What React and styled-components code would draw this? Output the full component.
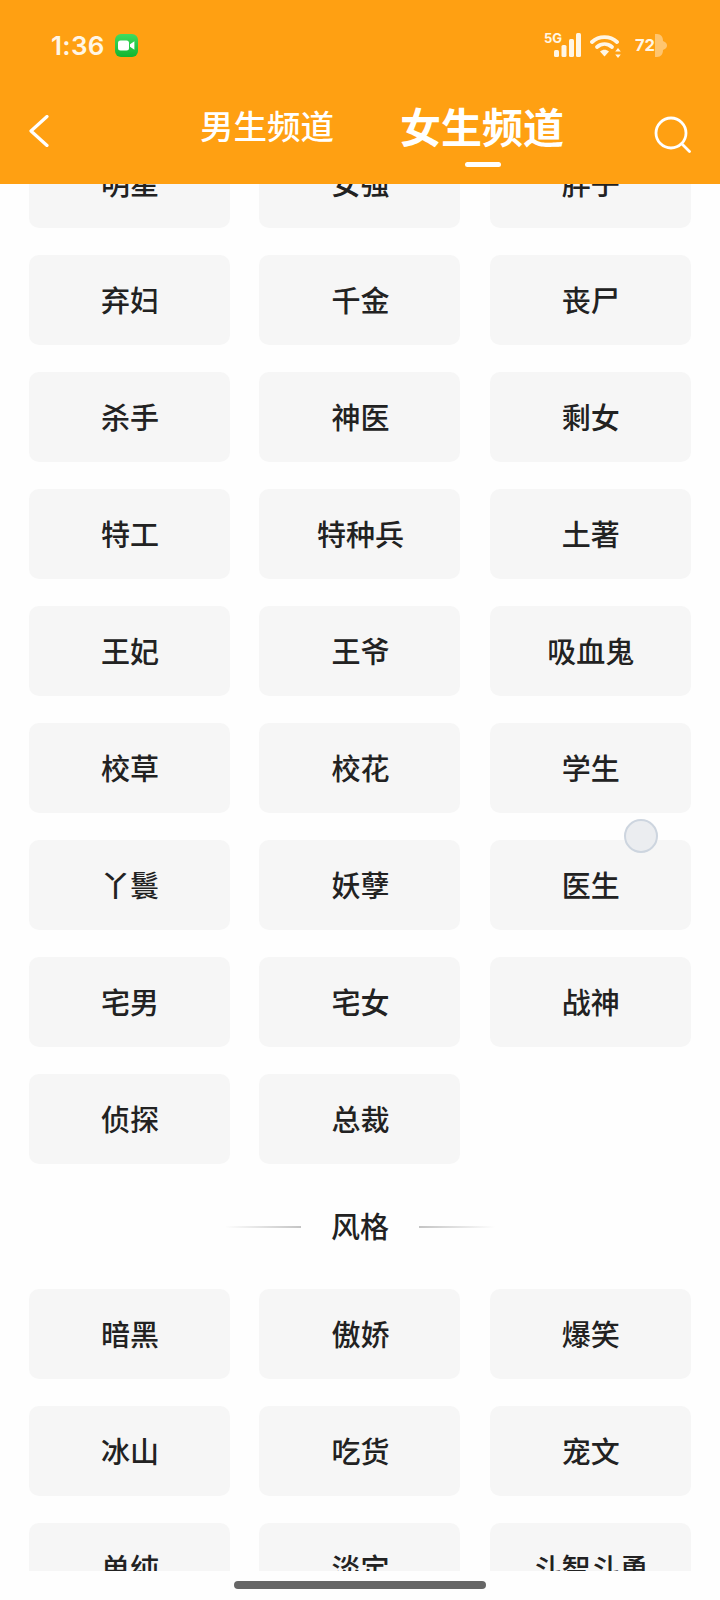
import React from 'react';
import styled, { createGlobalStyle } from 'styled-components';

const Global = createGlobalStyle`
  html, body { margin: 0; padding: 0; background: #fff; }
  * { box-sizing: border-box; }
`;
const CJK = `"Noto Sans CJK SC", "Noto Sans", sans-serif`;

const Page = styled.div`
  position: relative;
  width: 720px;
  height: 1600px;
  overflow: hidden;
  display: flex;
  flex-direction: column;
  background: #fefefe;
  font-family: ${CJK};
`;
const Header = styled.header`
  flex: none;
  height: 183.5px;
  background: #ffa012;
  color: #fff;
  position: relative;
  z-index: 1;
`;
const StatusBar = styled.div`
  height: 94px;
  padding: 34px 53px 0 51px;
  display: flex;
  align-items: flex-start;
`;
const Time = styled.span`
  font-family: Inter, sans-serif;
  font-weight: 600;
  font-size: 26px;
  line-height: 24px;
  letter-spacing: 0.3px;
  color: #fff6e6;
`;
const CallBadge = styled.span`
  width: 23px;
  height: 23px;
  margin-left: 10px;
  border-radius: 6px;
  background: linear-gradient(#3fdc5f, #12b52f);
  display: flex;
  align-items: center;
  justify-content: center;
`;
const StatusRight = styled.div`
  margin-left: auto;
  display: flex;
  align-items: flex-start;
`;
const BatteryText = styled.span`
  font-family: Inter, sans-serif;
  font-weight: 700;
  font-size: 16.5px;
  line-height: 23px;
  color: #fff6e6;
  margin-left: 14px;
`;
const Nav = styled.nav`
  height: 89.5px;
  padding: 0 29px;
  display: flex;
  align-items: flex-start;
`;
const BackButton = styled.span`
  display: block;
  margin-top: 21px;
  height: 32px;
  line-height: 0;
`;
const Tabs = styled.div`
  margin-left: 151px;
  display: flex;
  align-items: center;
  gap: 66px;
  height: 62px;
`;
const Tab = styled.span`
  position: relative;
  font-size: ${p => (p.$active ? '41px' : '33.5px')};
  font-weight: ${p => (p.$active ? 700 : 500)};
  line-height: 62px;
  white-space: nowrap;
  color: #fff;
  &::after {
    content: '';
    display: ${p => (p.$active ? 'block' : 'none')};
    position: absolute;
    left: 64.5px;
    bottom: -11px;
    width: 36px;
    height: 5px;
    border-radius: 3px;
    background: #fff;
  }
`;
const SearchButton = styled.span`
  display: block;
  margin-left: auto;
  margin-top: 22px;
  line-height: 0;
`;
const Clip = styled.main`
  flex: 1;
  min-height: 0;
  overflow: hidden;
`;
const Content = styled.div`
  margin-top: -45.5px;
  padding: 0 29px;
`;
const Grid = styled.div`
  display: grid;
  grid-template-columns: repeat(3, 201px);
  column-gap: 29.4px;
  row-gap: 27px;
`;
const Tile = styled.div`
  height: 90px;
  padding: 0 0 2px 1px;
  border-radius: 10px;
  background: #f6f6f6;
  color: #222;
  font-size: 29px;
  font-weight: 500;
  display: flex;
  align-items: center;
  justify-content: center;
`;
const SectionTitle = styled.div`
  height: 125px;
  display: flex;
  align-items: center;
  justify-content: center;
  gap: 30px;
  color: #222;
  font-size: 29px;
  font-weight: 500;
`;
const SectionLabel = styled.span`
  margin-bottom: 3px;
`;
const Rule = styled.span`
  width: 76px;
  height: 2px;
  background: linear-gradient(${p => (p.$flip ? 'to right' : 'to left')}, #c4c4c4, rgba(196,196,196,0));
`;
const Footer = styled.footer`
  flex: none;
  height: 29px;
  background: #fefefe;
  display: flex;
  justify-content: center;
  padding-top: 10px;
`;
const HomeBar = styled.span`
  width: 252px;
  height: 8px;
  border-radius: 4px;
  background: #666;
`;
const TouchDot = styled.span`
  position: absolute;
  left: 624px;
  top: 819px;
  width: 34px;
  height: 34px;
  border-radius: 50%;
  background: #ebedf0;
  border: 2px solid #cdd5df;
  z-index: 2;
`;

const first = ['明星','女强','胖子','弃妇','千金','丧尸','杀手','神医','剩女','特工','特种兵','土著','王妃','王爷','吸血鬼','校草','校花','学生','丫鬟','妖孽','医生','宅男','宅女','战神','侦探','总裁'];
const second = ['暗黑','傲娇','爆笑','冰山','吃货','宠文','单纯','淡定','斗智斗勇'];

export default function App() {
  return (
    <Page>
      <Global />
      <Header>
        <StatusBar>
          <Time>1:36</Time>
          <CallBadge>
            <svg width="17" height="11" viewBox="0 0 17 11">
              <rect x="0" y="0.5" width="11" height="10" rx="2.5" fill="#fff" />
              <path d="M12 4.2 16.4 1.2V9.8L12 6.8Z" fill="#fff" />
            </svg>
          </CallBadge>
          <StatusRight>
            <svg width="38" height="25" viewBox="0 0 38 25" style={{ marginTop: -2, overflow: 'visible' }}>
              <text x="0" y="11" fontFamily="Inter, sans-serif" fontWeight="700" fontSize="13" fill="#fff6e6">5G</text>
              <rect x="10" y="18" width="5" height="7" rx="1.5" fill="#fff6e6" />
              <rect x="17.500" y="13" width="5" height="12" rx="1.5" fill="#fff6e6" />
              <rect x="25" y="7" width="5" height="18" rx="1.5" fill="#fff6e6" />
              <rect x="32" y="1" width="5" height="24" rx="1.5" fill="#fff6e6" />
            </svg>
            <svg width="31" height="24" viewBox="0 0 31 24" style={{ marginLeft: 8, marginTop: 0 }}>
              <g fill="none" stroke="#fff6e6" strokeWidth="3.8" strokeLinecap="round">
                <path d="M2 8C9 1.500 20 1.500 27 8" />
                <path d="M7 13C11.500 9.200 17.500 9.200 22 13" />
              </g>
              <path d="M10 17.500C13 15 16 15 19 17.500L14.500 22.500Z" fill="#fff6e6" />
              <path d="M28 14 30.800 17.500H25.200ZM28 24 25.200 20.500H30.800Z" fill="#fff6e6" />
            </svg>
            <BatteryText>72</BatteryText>
            <svg width="12" height="23" viewBox="0 0 12 23">
              <path d="M0 0H2C6 0 8 3 8 7C11 8 12 10 12 11.500C12 13 11 15 8 16C8 20 6 23 2 23H0Z" fill="#ffc56f" />
            </svg>
          </StatusRight>
        </StatusBar>
        <Nav>
          <BackButton>
            <svg width="20" height="32" viewBox="0 0 20 32" fill="none" stroke="#fff" strokeWidth="3.2" strokeLinecap="round" strokeLinejoin="round">
              <path d="M18 1.500 2 16 18 30.500" />
            </svg>
          </BackButton>
          <Tabs>
            <Tab>男生频道</Tab>
            <Tab $active>女生频道</Tab>
          </Tabs>
          <SearchButton>
            <svg width="37" height="37" viewBox="0 0 37 37" fill="none" stroke="#fff" strokeWidth="2.8" strokeLinecap="round">
              <circle cx="17" cy="17" r="15" />
              <path d="M28.500 28.500 35.500 35.500" />
            </svg>
          </SearchButton>
        </Nav>
      </Header>
      <Clip>
        <Content>
          <Grid>
            {first.map(t => <Tile key={t}>{t}</Tile>)}
          </Grid>
          <SectionTitle>
            <Rule />
            <SectionLabel>风格</SectionLabel>
            <Rule $flip />
          </SectionTitle>
          <Grid>
            {second.map(t => <Tile key={t}>{t}</Tile>)}
          </Grid>
        </Content>
      </Clip>
      <Footer><HomeBar /></Footer>
      <TouchDot />
    </Page>
  );
}
